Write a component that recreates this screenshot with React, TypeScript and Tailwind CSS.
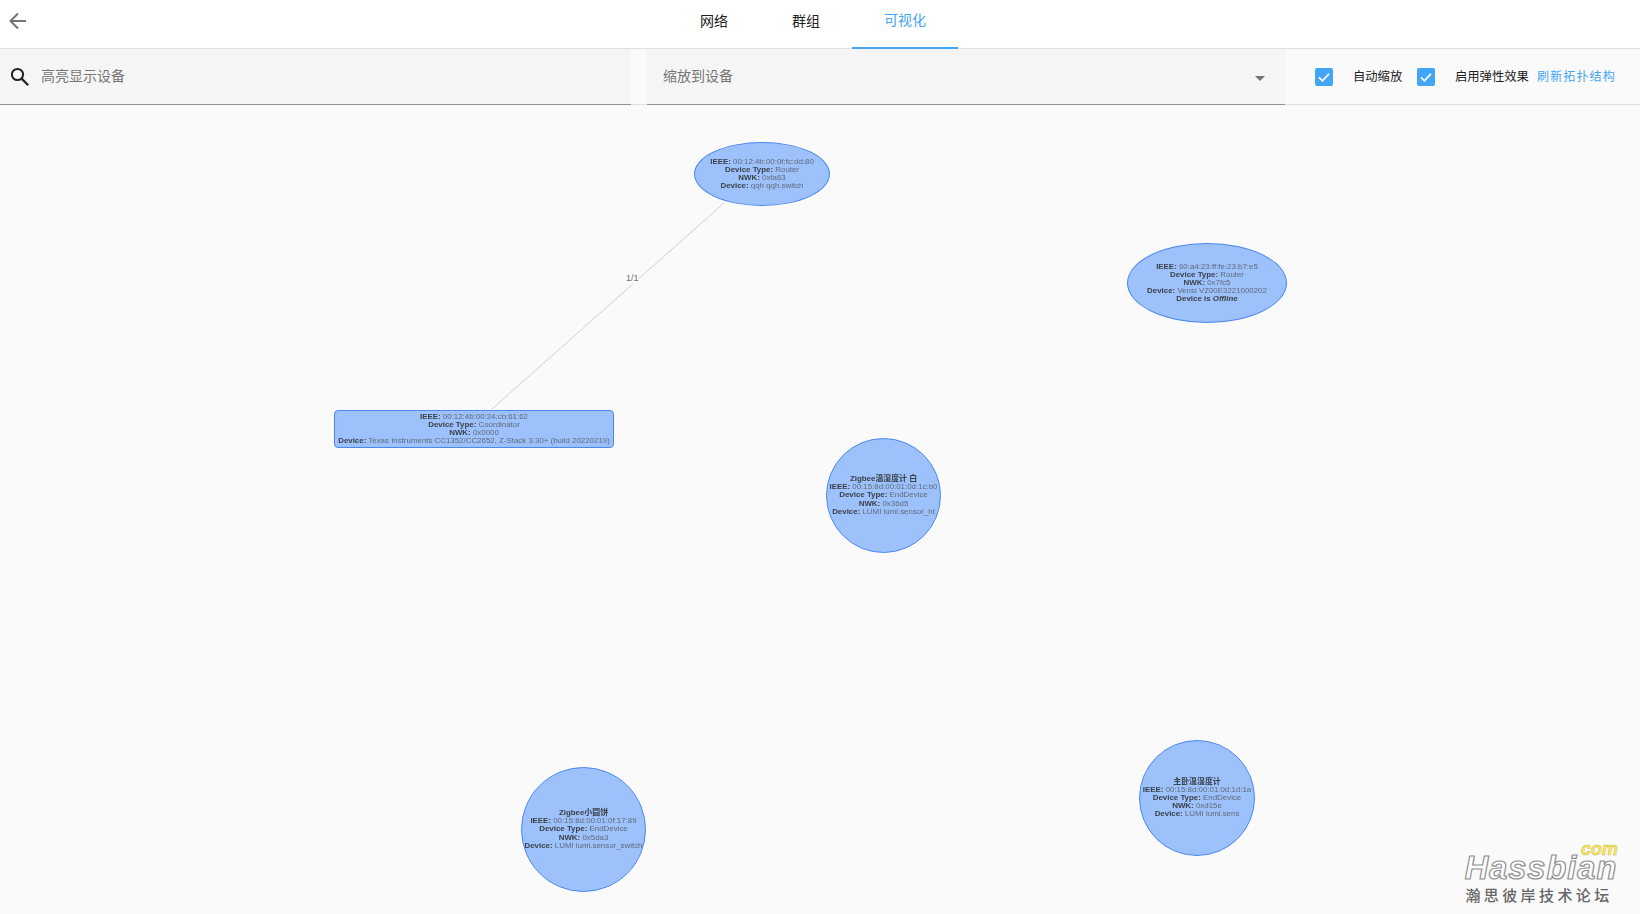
import React from "react";

const nodeText =
  "absolute flex flex-col items-center justify-center whitespace-nowrap bg-[#9dc1fb] border border-[#4c87ee] text-[7.9px] leading-[8.05px] text-[#5f6b7c] font-['Liberation_Sans','Noto_Sans_CJK_SC',sans-serif] blur-[0.3px]";

function L({ k, v }: { k: string; v: string }) {
  return (
    <div>
      <b className="font-bold text-[#3a3f48]">{k}:</b> {v}
    </div>
  );
}

function Check() {
  return (
    <div className="flex h-[18px] w-[18px] items-center justify-center rounded-[2px] bg-[#42a5f5]">
      <svg width="14" height="14" viewBox="0 0 14 14" fill="none">
        <path d="M2 7.4l3.4 3.4L12 3.8" stroke="#fff" strokeWidth="1.7" />
      </svg>
    </div>
  );
}

export default function App() {
  return (
    <div className="flex h-[914px] w-[1640px] flex-col overflow-hidden bg-[#fafafa] font-['Roboto','Noto_Sans_CJK_SC',sans-serif] text-sm text-[#212121]">
      <header className="flex h-[49px] shrink-0 border-b border-[#e0e0e0] bg-white">
        <div className="flex w-[668px] items-center pb-[6px] pl-[8px]">
          <svg width="20" height="20" viewBox="0 0 20 20" fill="none">
            <path d="M18 10H3M10 2.5L2.5 10l7.5 7.5" stroke="#757575" strokeWidth="2" />
          </svg>
        </div>
        <div className="flex items-center justify-center px-8 pb-[6px]">网络</div>
        <div className="flex items-center justify-center px-8 pb-[6px]">群组</div>
        <div className="-mb-px flex items-center justify-center border-b-2 border-[#42a5f5] px-8 pb-[7px] text-[#42a5f5]">可视化</div>
      </header>

      <div className="flex h-[56px] shrink-0 border-b border-[#e0e0e0]">
        <div className="-mb-px flex w-[631px] items-center border-b border-[#949494] bg-[#f5f5f5] pl-[10px] text-[#757575]">
          <svg width="20" height="20" viewBox="0 0 20 20" fill="none" className="mr-[11px] mt-[1px]">
            <circle cx="7.5" cy="7.5" r="5.6" stroke="#212121" strokeWidth="2" />
            <path d="M11.6 11.6l6.6 6.6" stroke="#212121" strokeWidth="2.2" />
          </svg>
          <span className="-mt-px">高亮显示设备</span>
        </div>
        <div className="-mb-px ml-[16px] flex w-[638px] items-center justify-between border-b border-[#949494] bg-[#f5f5f5] pl-[16px] pr-[20px] text-[#757575]">
          <span className="-mt-px">缩放到设备</span>
          <div className="mt-[3px] h-0 w-0 border-x-[5px] border-t-[5px] border-x-transparent border-t-[#757575]" />
        </div>
        <div className="flex items-center pt-[1px] pl-[30px] text-[12.3px]">
          <Check />
          <span className="ml-[20px] mt-[1px] w-[49px] whitespace-nowrap">自动缩放</span>
          <div className="ml-[15px]"><Check /></div>
          <span className="ml-[20px] mt-[1px] w-[73px] whitespace-nowrap">启用弹性效果</span>
          <span className="ml-[9px] mt-[2px] text-[12px] tracking-[1.15px] text-[#42a5f5]">刷新拓扑结构</span>
        </div>
      </div>

      <main className="relative flex-1">
        <svg className="absolute inset-0" width="1640" height="809">
          <line x1="724" y1="98" x2="492" y2="304" stroke="#d0d0d0" strokeWidth="1" />
        </svg>
        <span className="absolute left-[626px] top-[168px] bg-[#fafafa] font-['Liberation_Sans',sans-serif] text-[9px] leading-[11px] text-[#707070]">1/1</span>

        <div className={`${nodeText} left-[694px] top-[37px] h-[64px] w-[136px] rounded-[50%]`}>
          <L k="IEEE" v="00:12:4b:00:0f:fc:dd:80" />
          <L k="Device Type" v="Router" />
          <L k="NWK" v="0xfa63" />
          <L k="Device" v="qqh qqh.switch" />
        </div>

        <div className={`${nodeText} left-[1127px] top-[138px] h-[80px] w-[160px] rounded-[50%]`}>
          <L k="IEEE" v="60:a4:23:ff:fe:23:b7:e5" />
          <L k="Device Type" v="Router" />
          <L k="NWK" v="0x7fc5" />
          <L k="Device" v="Vensi VZ00E3221000202" />
          <b className="font-bold text-[#3a3f48]">Device is <i>Offline</i></b>
        </div>

        <div className={`${nodeText} left-[334px] top-[305px] h-[38px] w-[280px] rounded-[4px]`}>
          <L k="IEEE" v="00:12:4b:00:24:cb:61:62" />
          <L k="Device Type" v="Coordinator" />
          <L k="NWK" v="0x0000" />
          <L k="Device" v="Texas Instruments CC1352/CC2652, Z-Stack 3.30+ (build 20220219)" />
        </div>

        <div className={`${nodeText} left-[826px] top-[333px] h-[115px] w-[115px] rounded-full`}>
          <b className="font-bold text-[#3a3f48]">Zigbee温湿度计 白</b>
          <L k="IEEE" v="00:15:8d:00:01:0d:1c:b0" />
          <L k="Device Type" v="EndDevice" />
          <L k="NWK" v="0x36d5" />
          <L k="Device" v="LUMI lumi.sensor_ht" />
        </div>

        <div className={`${nodeText} left-[521px] top-[662px] h-[125px] w-[125px] rounded-full`}>
          <b className="font-bold text-[#3a3f48]">Zigbee小圆饼</b>
          <L k="IEEE" v="00:15:8d:00:01:0f:17:89" />
          <L k="Device Type" v="EndDevice" />
          <L k="NWK" v="0x5da3" />
          <L k="Device" v="LUMI lumi.sensor_switch" />
        </div>

        <div className={`${nodeText} left-[1139px] top-[635px] h-[116px] w-[116px] rounded-full`}>
          <b className="font-bold text-[#3a3f48]">主卧温湿度计</b>
          <L k="IEEE" v="00:15:8d:00:01:0d:1d:1a" />
          <L k="Device Type" v="EndDevice" />
          <L k="NWK" v="0xd15e" />
          <L k="Device" v="LUMI lumi.sens" />
        </div>

        <div className="absolute left-[1461px] top-[738px] flex w-[160px] flex-col items-center font-['Liberation_Sans','Noto_Sans_CJK_SC',sans-serif]">
          <span className="self-end pr-[3px] text-[18px] font-bold italic leading-[13px] text-[#fdeb6b] [-webkit-text-stroke:0.5px_#c9b93c]">com</span>
          <span className="text-[32.5px] font-bold italic leading-[24px] tracking-[1px] text-[#fdfdfd] [-webkit-text-stroke:1.2px_#8f8f8f]">Hassbian</span>
          <span className="mt-[8px] pr-[4px] text-[15px] font-medium leading-[16px] tracking-[3.4px] text-[#666]">瀚思彼岸技术论坛</span>
        </div>
      </main>
    </div>
  );
}
